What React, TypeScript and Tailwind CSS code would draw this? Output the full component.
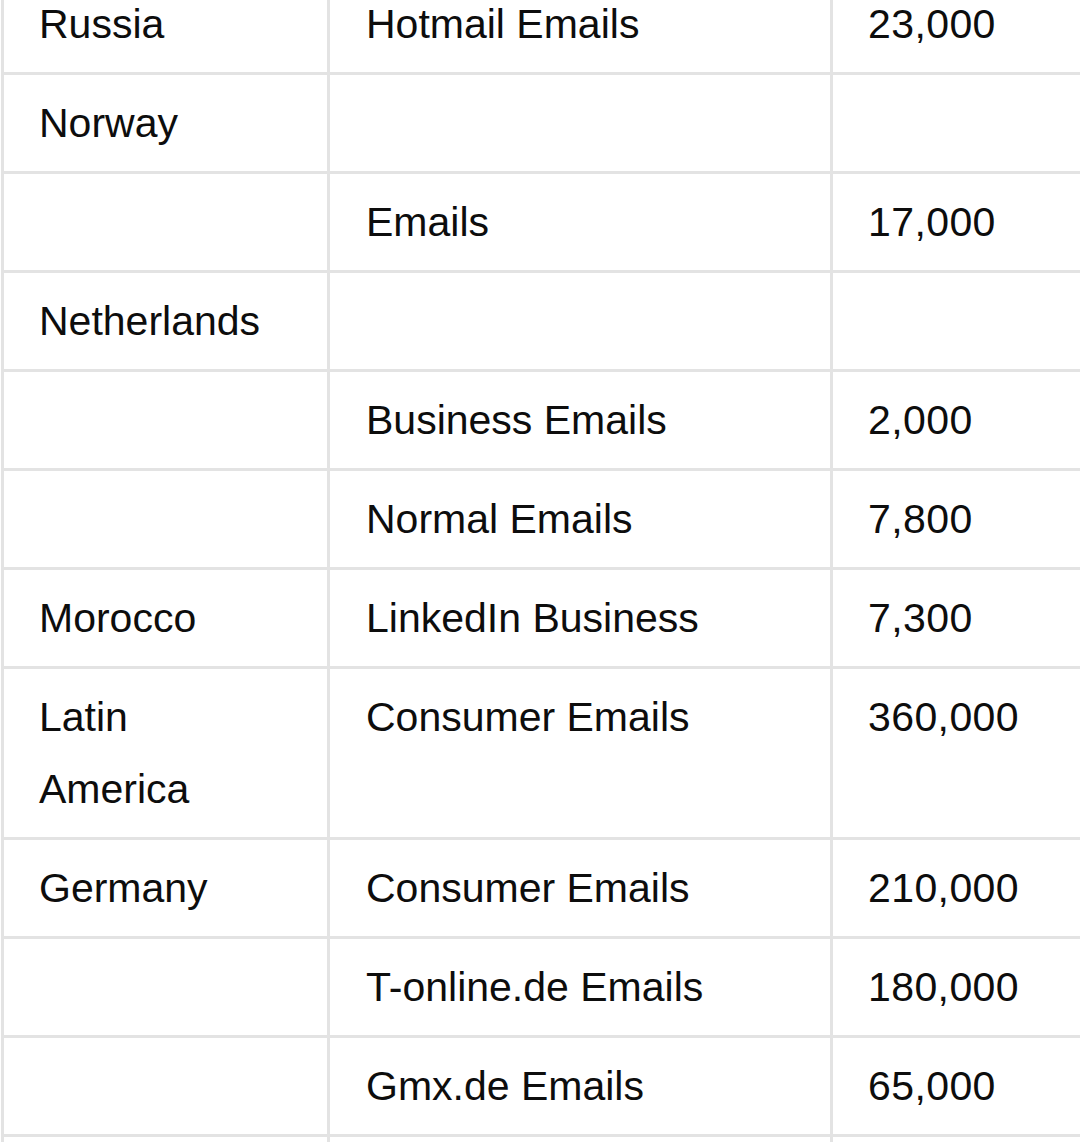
import React from 'react';

type Row = { country: string; type: string; count: string };

const rows: Row[] = [
  { country: 'Russia', type: 'Hotmail Emails', count: '23,000' },
  { country: 'Norway', type: '', count: '' },
  { country: '', type: 'Emails', count: '17,000' },
  { country: 'Netherlands', type: '', count: '' },
  { country: '', type: 'Business Emails', count: '2,000' },
  { country: '', type: 'Normal Emails', count: '7,800' },
  { country: 'Morocco', type: 'LinkedIn Business', count: '7,300' },
  { country: 'Latin America', type: 'Consumer Emails', count: '360,000' },
  { country: 'Germany', type: 'Consumer Emails', count: '210,000' },
  { country: '', type: 'T-online.de Emails', count: '180,000' },
  { country: '', type: 'Gmx.de Emails', count: '65,000' },
  { country: '', type: '', count: '' },
];

const App: React.FC = () => {
  return (
    <div className="h-[1142px] w-[1080px] overflow-hidden bg-white">
      <div
        className="-mt-[24px] ml-[1px] w-[1120px] border-l-[3px] border-[#e3e3e3] text-[41px] leading-[72px] text-[#0d0d0d]"
        style={{ fontFamily: '"Liberation Sans", Arial, sans-serif' }}
      >
        {rows.map((r, i) => (
          <div key={i} className="flex border-b-[3px] border-[#e3e3e3]">
            <div className="w-[323px] shrink-0 px-[35px] py-3 min-h-[96px]">
              {r.country === 'Latin America' ? <>Latin<br />America</> : r.country}
            </div>
            <div className="w-[503px] shrink-0 border-l-[3px] border-[#e3e3e3] px-[36px] py-3">{r.type}</div>
            <div className="flex-1 border-l-[3px] border-[#e3e3e3] px-[35px] py-3 tracking-[0.4px]">{r.count}</div>
          </div>
        ))}
      </div>
    </div>
  );
};

export default App;
